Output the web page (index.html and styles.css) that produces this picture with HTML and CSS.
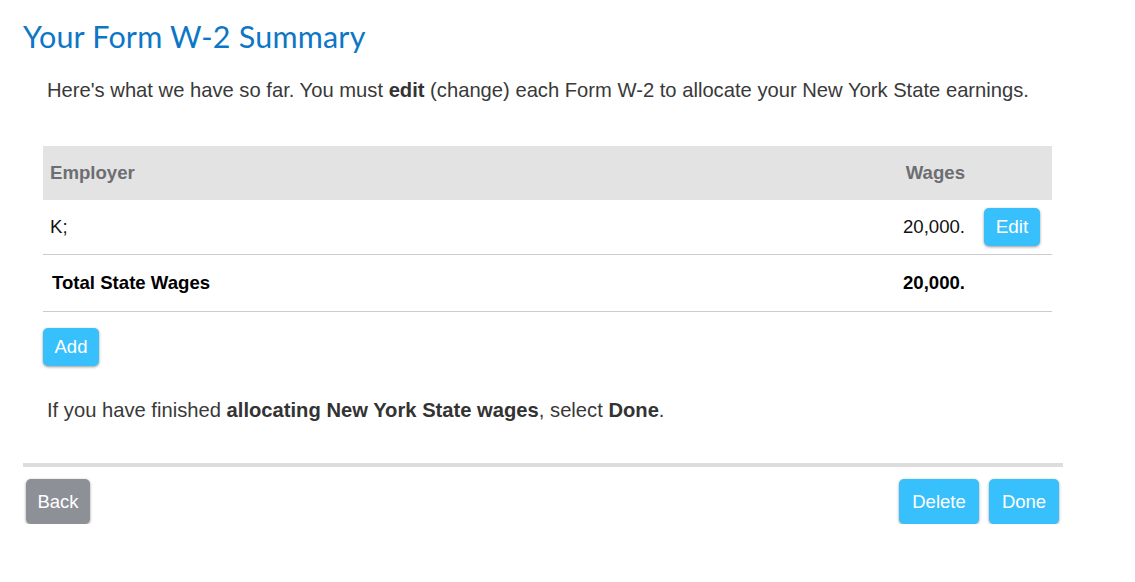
FILE: index.html
```html
<!DOCTYPE html>
<html>
<head>
<meta charset="utf-8">
<link rel="stylesheet" href="styles.css">
</head>
<body>
<div class="page">
  <h1 class="title">Your Form W-2 Summary</h1>
  <div class="content">
    <p class="intro">Here's what we have so far. You must <b>edit</b> (change) each Form W-2 to allocate your New York State earnings.</p>
    <table class="w2">
      <thead>
        <tr><th class="emp">Employer</th><th class="wage">Wages</th><th class="act"></th></tr>
      </thead>
      <tbody>
        <tr><td class="emp">K;</td><td class="wage">20,000.</td><td class="act"><button class="btn btn-blue">Edit</button></td></tr>
        <tr class="total"><td class="emp">Total State Wages</td><td class="wage">20,000.</td><td class="act"></td></tr>
      </tbody>
    </table>
    <button class="btn btn-blue add">Add</button>
    <p class="outro">If you have finished <b>allocating New York State wages</b>, select <b>Done</b>.</p>
  </div>
  <div class="footer">
    <button class="btn btn-gray big">Back</button>
    <div class="right">
      <button class="btn btn-blue big delete">Delete</button>
      <button class="btn btn-blue big done">Done</button>
    </div>
  </div>
</div>
</body>
</html>
```
FILE: styles.css
```css
html, body { margin: 0; padding: 0; background: #fff; }
body { font-family: "Liberation Sans", Arial, sans-serif; color: #333; }
.page { width: 1040px; margin-left: 23px; padding-top: 18px; }
.title {
  margin: 0;
  font-family: Lato, "Open Sans", sans-serif;
  font-weight: 400;
  font-size: 30.5px;
  line-height: 36px;
  color: #0d77c6;
  letter-spacing: 0.2px;
}
.content { padding-left: 20px; width: 1009px; }
.intro { margin: 24px 0 0 4px; font-size: 20.2px; line-height: 24px; color: #393939; }
.intro b, .outro b { color: #333; }
.w2 { margin-top: 44px; width: 1009px; border-collapse: collapse; font-size: 18.6px; }
.w2 th { background: #e3e3e3; color: #6d6e71; font-weight: 700; height: 54px; padding: 0; }
.w2 td { height: 54px; padding: 0; border-bottom: 1px solid #cccccc; color: #111; }
.w2 .emp { text-align: left; padding-left: 7px; }
.w2 .wage { text-align: right; width: 200px; }
.w2 .act { width: 68px; text-align: left; padding-left: 19px; }
.w2 .total td { height: 56px; font-weight: 700; color: #000; }
.w2 .total .emp { padding-left: 9px; }
.btn {
  font-family: "Liberation Sans", Arial, sans-serif;
  font-size: 18.5px;
  color: #fff;
  border: none;
  border-radius: 5px;
  box-shadow: 0 1px 3px rgba(0,0,0,0.4);
  padding: 0;
  cursor: pointer;
}
.btn-blue { background: #37c0fc; }
.btn-gray { background: #8d9097; }
.w2 .btn { width: 56px; height: 38px; display: block; font-size: 19px; }
.add { display: block; width: 56px; height: 38px; margin-top: 16px; }
.outro { margin: 32px 0 0 4px; font-size: 20.2px; line-height: 24px; color: #393939; }
.footer {
  margin-top: 41px;
  border-top: 4px solid #dddddd;
  display: flex;
  justify-content: space-between;
  padding: 12px 4px 0 3px;
}
.right { display: flex; gap: 10px; }
.big { height: 45px; }
.btn-gray.big { width: 64px; }
.delete { width: 80px; }
.done { width: 70px; }
```
